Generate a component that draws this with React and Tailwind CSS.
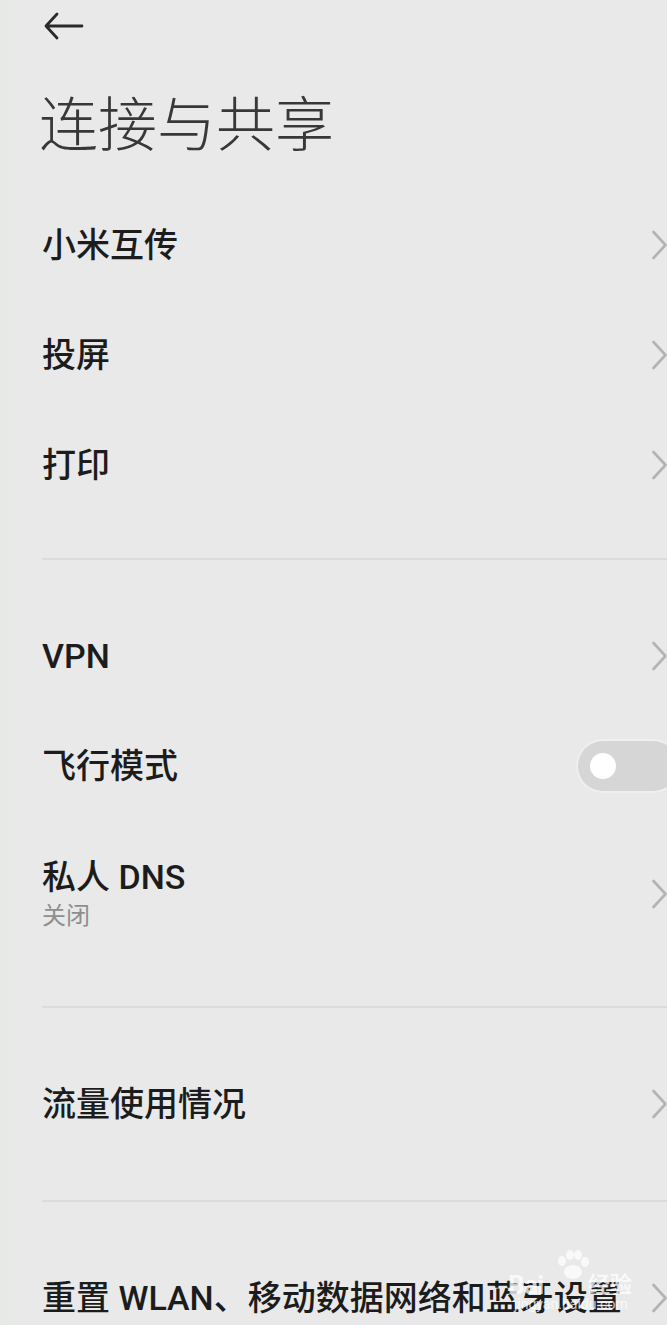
import React from "react";

const FONT = { fontFamily: 'Roboto, "Noto Sans CJK SC", "Noto Sans", sans-serif' };

function Chevron() {
  return (
    <svg width="15" height="30" viewBox="0 0 15 30" className="shrink-0">
      <path d="M1.5 2 L13.5 15 L1.5 28" fill="none" stroke="#b3b3b3" strokeWidth="2.6" strokeLinecap="round" strokeLinejoin="round" />
    </svg>
  );
}

function Row({ title, sub, right, h = "h-[110px]" }) {
  return (
    <div className={`flex items-center justify-between ${h}`}>
      <div className="flex flex-col">
        <span className="text-[34px] leading-[40px] font-medium text-[#1c1c1c] whitespace-nowrap">{title}</span>
        {sub && <span className="text-[24px] leading-[30px] text-[#8e8e8e] mt-[4px]">{sub}</span>}
      </div>
      {right ?? <Chevron />}
    </div>
  );
}

function Divider({ mt = "mt-[38px]" }) {
  return <div className={`${mt} mb-[41px] h-[2px] bg-[#dcdcdc]`} />;
}

function Toggle() {
  return (
    <div className="w-[100px] h-[50px] rounded-full bg-[#d6d6d6] flex items-center pl-[12px] -mr-[11px] shrink-0 shadow-[0_0_0_2px_#efefef]">
      <div className="w-[26px] h-[26px] rounded-full bg-white" />
    </div>
  );
}

export default function App() {
  return (
    <div className="w-[667px] h-[1325px] bg-[#e9e9e9] overflow-hidden relative" style={FONT}>
      <div className="absolute left-0 top-0 bottom-0 w-[7px] bg-[#e6e9e6]" />
      <div className="pl-[42px]">
        <div className="h-[52px] flex items-center">
          <svg width="42" height="30" viewBox="0 0 42 30">
            <path d="M40 15 H5 M15 3 L4 15 L15 27" fill="none" stroke="#2a2a2a" strokeWidth="2.8" strokeLinecap="round" strokeLinejoin="round" />
          </svg>
        </div>
        <div className="h-[138px] flex items-center">
          <h1 className="text-[59px] leading-[70px] font-light text-[#383838] -ml-[3px] mt-[10px]">连接与共享</h1>
        </div>
        <Row title="小米互传" />
        <Row title="投屏" />
        <Row title="打印" />
        <Divider />
        <Row title="VPN" />
        <Row title="飞行模式" right={<Toggle />} />
        <Row title="私人 DNS" sub="关闭" h="h-[146px]" />
        <Divider mt="mt-[39px]" />
        <Row title="流量使用情况" />
        <Divider mt="mt-[41px]" />
        <Row title="重置 WLAN、移动数据网络和蓝牙设置" />
      </div>
      <div className="absolute left-[508px] top-[1250px] w-[130px] h-[62px] pointer-events-none text-white opacity-75 whitespace-nowrap">
        <svg width="40" height="30" viewBox="0 0 40 30" className="absolute left-[44px] top-0">
          <g fill="white">
            <ellipse cx="10" cy="11" rx="4" ry="5" />
            <ellipse cx="18" cy="5" rx="4" ry="5" />
            <ellipse cx="26" cy="5" rx="4" ry="5" />
            <ellipse cx="33" cy="12" rx="4" ry="5" />
            <ellipse cx="21" cy="22" rx="9" ry="7" />
          </g>
        </svg>
        <span className="absolute left-0 top-[20px] text-[26px] leading-[30px] font-bold tracking-tight">Bai</span>
        <span className="absolute left-[80px] top-[22px] text-[22px] leading-[26px] font-bold">经验</span>
        <span className="absolute left-[6px] top-[46px] text-[14px] leading-[16px]">jingyan.baidu.com</span>
      </div>
    </div>
  );
}
